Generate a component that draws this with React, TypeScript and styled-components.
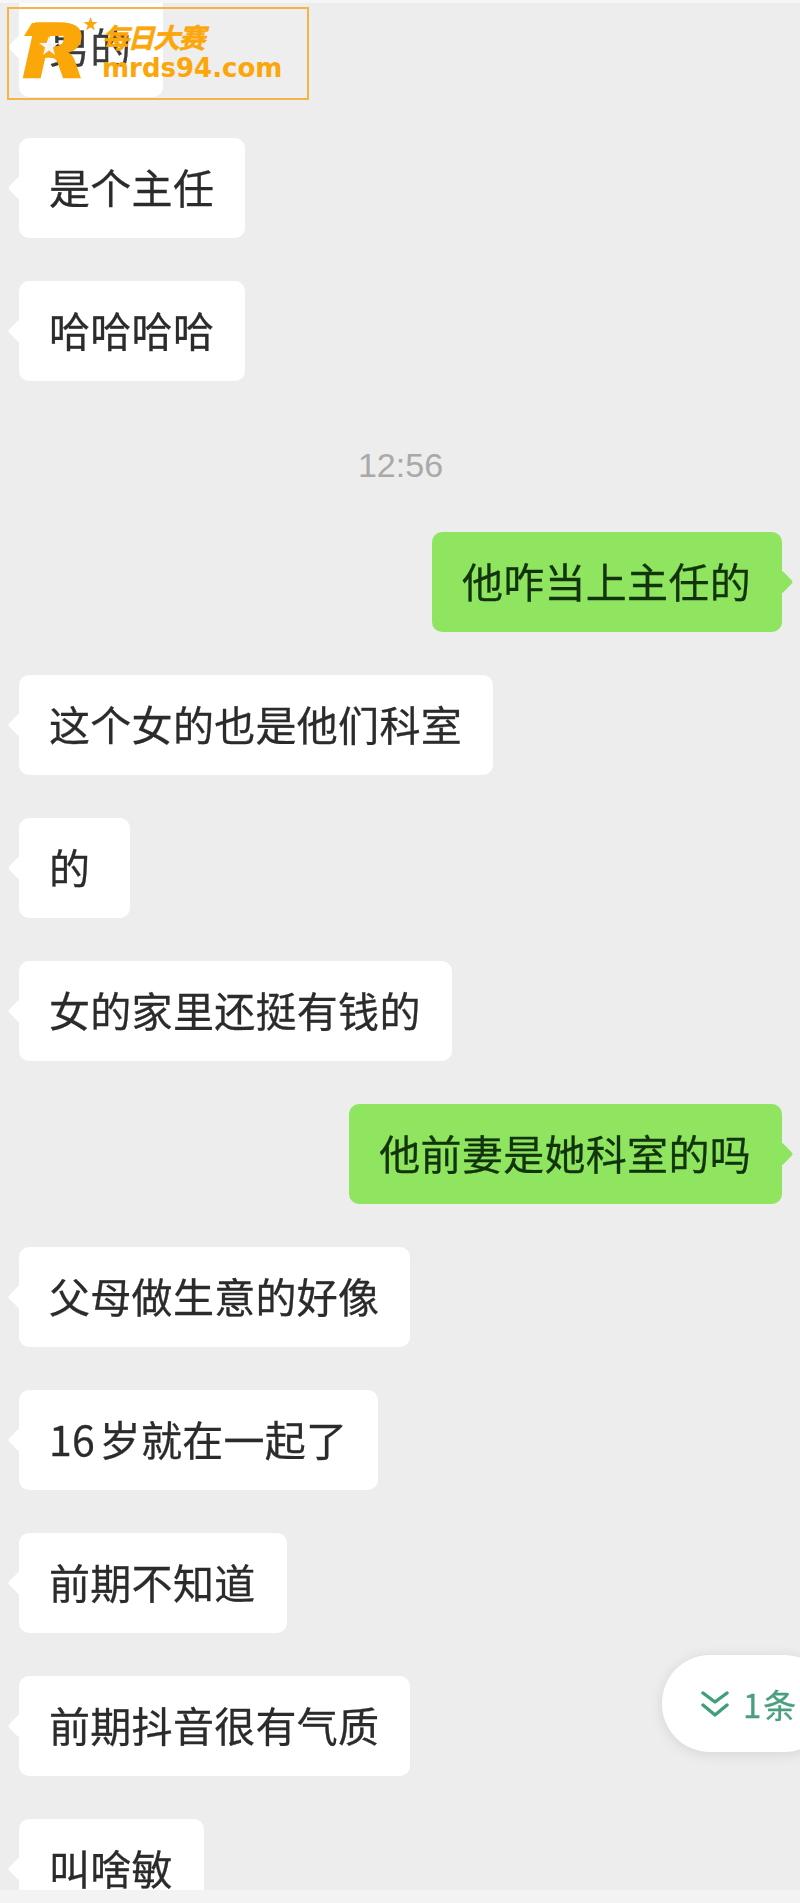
import React from "react";
import styled, { createGlobalStyle } from "styled-components";

const GlobalStyle = createGlobalStyle`
  html, body {
    margin: 0;
    padding: 0;
    background: #ededed;
  }
`;

const Page = styled.div`
  position: relative;
  width: 800px;
  height: 1903px;
  overflow: hidden;
  display: flex;
  flex-direction: column;
  background: #ededed;
  font-family: "Noto Sans CJK SC", "Noto Sans", sans-serif;
`;

const TopEdge = styled.div`
  height: 3px;
  flex: none;
  background: #f6f6f6;
`;

const BottomEdge = styled.div`
  height: 13px;
  flex: none;
  background: #f3f3f3;
`;

const Thread = styled.div`
  flex: 1;
  min-height: 0;
  overflow: hidden;
  display: flex;
  flex-direction: column;
  gap: 43px;
  padding: 0 18px 0 19px;
  & > :first-child {
    margin: -6px 0 -2px;
  }
`;

const Row = styled.div<{ $mine?: boolean }>`
  display: flex;
  flex: none;
  justify-content: ${(p) => (p.$mine ? "flex-end" : "flex-start")};
`;

const Bubble = styled.div<{ $mine?: boolean }>`
  position: relative;
  height: 100px;
  min-width: 111px;
  box-sizing: border-box;
  padding: 0 31px 3px 30px;
  display: flex;
  align-items: center;
  border-radius: 10px;
  background: ${(p) => (p.$mine ? "#8fe560" : "#ffffff")};
  color: ${(p) => (p.$mine ? "#12340d" : "#2b2b2b")};
  font-size: 41px;
  line-height: 1;
  letter-spacing: 0.3px;
  word-spacing: -5px;
  white-space: nowrap;
  -webkit-text-stroke: 0.3px currentColor;
  filter: blur(0.4px);
  &::before {
    content: "";
    position: absolute;
    top: 50%;
    ${(p) => (p.$mine ? "right: -8px;" : "left: -8px;")}
    width: 17px;
    height: 17px;
    border-radius: 3px;
    background: inherit;
    transform: translateY(-50%) rotate(45deg);
  }
`;

const Timestamp = styled.div`
  flex: none;
  height: 65px;
  padding-top: 21px;
  box-sizing: border-box;
  text-align: center;
  font-family: "Liberation Sans", Arial, sans-serif;
  font-size: 34px;
  line-height: 40px;
  color: #a9a9a9;
`;

const Watermark = styled.div`
  position: absolute;
  top: 7px;
  left: 7px;
  width: 302px;
  height: 93px;
  box-sizing: border-box;
  border: 2px solid #f6b347;
  display: flex;
  align-items: flex-start;
  background: rgba(255, 255, 255, 0.08);
  color: #fba609;
`;

const LogoMark = styled.svg`
  flex: none;
  width: 84px;
  height: 72px;
  margin: 7px 0 0 7px;
  overflow: visible;
`;

const BrandText = styled.div`
  display: flex;
  flex-direction: column;
  margin-left: 2px;
  padding-top: 12px;
`;

const BrandTitle = styled.div`
  font-size: 27px;
  font-weight: 700;
  font-style: italic;
  line-height: 32px;
  letter-spacing: -1.5px;
  -webkit-text-stroke: 0.5px #fba609;
`;

const BrandUrl = styled.div`
  font-family: "DejaVu Sans", Verdana, sans-serif;
  font-size: 26px;
  font-weight: 700;
  line-height: 28px;
  margin-top: 1px;
`;

const JumpPill = styled.div`
  position: absolute;
  top: 1655px;
  left: 662px;
  width: 170px;
  height: 97px;
  box-sizing: border-box;
  padding-left: 39px;
  border-radius: 48px;
  display: flex;
  align-items: center;
  gap: 14px;
  background: #ffffff;
  box-shadow: 0 2px 14px rgba(0, 0, 0, 0.1);
  color: #4a9f7f;
  font-size: 33px;
  letter-spacing: 2px;
  white-space: nowrap;
  -webkit-text-stroke: 0.3px currentColor;
  filter: blur(0.4px);
`;

const messages: { text: string; mine?: boolean; time?: boolean }[] = [
  { text: "男的" },
  { text: "是个主任" },
  { text: "哈哈哈哈" },
  { text: "12:56", time: true },
  { text: "他咋当上主任的", mine: true },
  { text: "这个女的也是他们科室" },
  { text: "的" },
  { text: "女的家里还挺有钱的" },
  { text: "他前妻是她科室的吗", mine: true },
  { text: "父母做生意的好像" },
  { text: "16 岁就在一起了" },
  { text: "前期不知道" },
  { text: "前期抖音很有气质" },
  { text: "叫啥敏" },
];

export default function App() {
  return (
    <Page>
      <GlobalStyle />
      <TopEdge />
      <Thread>
        {messages.map((m) =>
          m.time ? (
            <Timestamp key={m.text}>{m.text}</Timestamp>
          ) : (
            <Row key={m.text} $mine={m.mine}>
              <Bubble $mine={m.mine}>{m.text}</Bubble>
            </Row>
          )
        )}
      </Thread>
      <BottomEdge />

      <Watermark>
        <LogoMark viewBox="0 0 84 72">
          <polygon points="16,7 52,7 46,20 8,20" fill="#fba609" />
          <text
            x="6"
            y="62"
            textLength="66"
            lengthAdjust="spacingAndGlyphs"
            fontFamily="'DejaVu Sans', Verdana, sans-serif"
            fontSize="75"
            fontWeight="700"
            fontStyle="italic"
            fill="#fba609"
            stroke="#fba609"
            strokeWidth="1.5"
          >
            R
          </text>
          <polygon
            points="33,20 35.5,27 43,27 37,31.5 39,39 33,34.5 27,39 29,31.5 23,27 30.5,27"
            fill="#f4f4f4"
          />
          <polygon
            points="74.5,1 76.3,6 81.5,6 77.3,9.2 78.8,14.5 74.5,11.3 70.2,14.5 71.7,9.2 67.5,6 72.7,6"
            fill="#fba609"
          />
        </LogoMark>
        <BrandText>
          <BrandTitle>每日大赛</BrandTitle>
          <BrandUrl>mrds94.com</BrandUrl>
        </BrandText>
      </Watermark>

      <JumpPill>
        <svg width="28" height="28" viewBox="0 0 28 28" fill="none" stroke="#3f9f78" strokeWidth="3.4" strokeLinecap="round" strokeLinejoin="round">
          <path d="M2 3l12 9 12-9" />
          <path d="M2 15l12 10 12-10" />
        </svg>
        <span>1条</span>
      </JumpPill>
    </Page>
  );
}
